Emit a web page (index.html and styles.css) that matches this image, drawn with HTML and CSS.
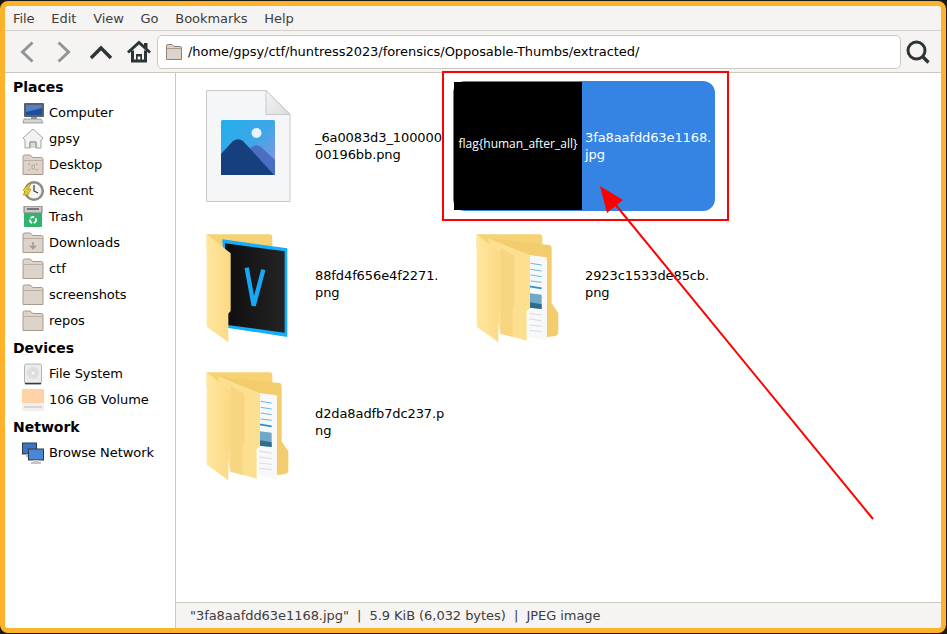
FILE: index.html
```html
<!DOCTYPE html>
<html lang="en">

<head>
  <meta charset="UTF-8">
  <title>extracted</title>
  <link rel="stylesheet" href="styles.css">
</head>

<body>
  <svg class="defs" width="0" height="0">
    <defs>
      <linearGradient id="pic" x1="0" y1="0" x2="1" y2="1">
        <stop offset="0" stop-color="#1fb0ec" />
        <stop offset="0.5" stop-color="#3fa6e6" />
        <stop offset="1" stop-color="#9a8fe0" />
      </linearGradient>
      <linearGradient id="flap" x1="0" y1="0" x2="1" y2="0">
        <stop offset="0" stop-color="#ffe79f" />
        <stop offset="1" stop-color="#fcd983" />
      </linearGradient>
      <linearGradient id="fold" x1="0" y1="0" x2="1" y2="1">
        <stop offset="0" stop-color="#f4f4f4" />
        <stop offset="1" stop-color="#dcdcdc" />
      </linearGradient>
      <linearGradient id="vcard" x1="0" y1="0" x2="1" y2="0">
        <stop offset="0" stop-color="#0e0e0e" />
        <stop offset="1" stop-color="#242424" />
      </linearGradient>

      <symbol id="stack" viewBox="-21 -18 390 390">
        <path d="M50 28H238Q247 28 247 38V70H50Z" fill="#f6d273" />
        <path d="M85 40L268 60Q275 61 275 70V235L295 265V322Q295 332 285 333L260 337V100L205 90Z" fill="#f3cc6e" />
        <path d="M205 90L260 97V347L205 337Z" fill="#f7f8fa" />
        <path d="M212 115L245 120M212 133L245 138M212 150L245 155M212 168L245 172" stroke="#6db6e6" stroke-width="3" />
        <path d="M208 184L245 190" stroke="#2d8fdc" stroke-width="5" />
        <path d="M210 205L245 209V252L210 248Z" fill="#6fa9c9" />
        <path d="M210 232L245 238V252L210 248Z" fill="#2f6d8a" />
        <path d="M208 265L245 270M208 282L245 287M208 300L245 304M208 316L245 320" stroke="#c9ccd0" stroke-width="2" />
        <path d="M85 40L210 92V250L200 258V347L120 325L100 200Z" fill="#fde08f" />
        <path d="M122 68L163 92V240L158 250V336L122 326Z" fill="#f8d581" />
        <path d="M50 28L122 85V258L115 266V352L50 305Z" fill="url(#flap)" />
      </symbol>

      <symbol id="vfolder" viewBox="-21 -18 390 390">
        <path d="M50 28H238Q247 28 247 38V72H50Z" fill="#f6d273" />
        <path d="M97 43L292 70V336L110 308Z" fill="#14aefc" />
        <path d="M105 55L284 79V323L112 300Z" fill="url(#vcard)" />
        <path d="M170 128L191 242L220 134" fill="none" stroke="#18a8f5" stroke-width="13" stroke-linejoin="bevel" />
        <path d="M50 28L122 85V258L115 266V352L50 305Z" fill="url(#flap)" />
      </symbol>

      <symbol id="place" viewBox="0 0 22 22">
        <path d="M1 5V2.500Q1 1 2.500 1H8L11 3.500H19.500Q21 3.500 21 5V20.500H1Z" fill="#dcd3ca" stroke="#a8998c" />
        <path d="M1 6.500H21" stroke="#bcaea2" />
      </symbol>
    </defs>
  </svg>

  <div class="window">
    <nav class="menubar">
      <span>File</span>
      <span>Edit</span>
      <span>View</span>
      <span>Go</span>
      <span>Bookmarks</span>
      <span>Help</span>
    </nav>

    <header class="toolbar">
      <svg class="tool tool-back" width="14" height="22" viewBox="0 0 14 22">
        <path d="M12.500 1.500L2.500 11L12.500 20.500" fill="none" stroke="#929595" stroke-width="3" />
      </svg>
      <svg class="tool tool-forward" width="14" height="22" viewBox="0 0 14 22">
        <path d="M1.500 1.500L11.500 11L1.500 20.500" fill="none" stroke="#929595" stroke-width="3" />
      </svg>
      <svg class="tool tool-up" width="24" height="16" viewBox="0 0 24 16">
        <path d="M2 14L12 4L22 14" fill="none" stroke="#2e3436" stroke-width="3.400" />
      </svg>
      <svg class="tool tool-home" width="26" height="24" viewBox="0 0 26 24">
        <path d="M2 12.500L13 2.500L24 12.500" fill="none" stroke="#2e3436" stroke-width="3" />
        <path d="M18 3H21.500V8H18Z" fill="#2e3436" />
        <path d="M6.500 10.500V21H19.500V10.500" fill="none" stroke="#2e3436" stroke-width="3" />
        <path d="M10 14H16V21H14.300V16.500H11.700V21H10Z" fill="#2e3436" />
      </svg>
      <div class="location">
        <svg width="16" height="16" viewBox="0 0 16 16">
          <path d="M.5 14.500V2Q.5 .5 2 .5H6L8 2.500H14Q15.500 2.500 15.500 4V15.500H.5Z" fill="#dcd3ca" stroke="#8f8073" />
          <path d="M.5 4.500H15.500" stroke="#a89a8d" />
        </svg>
        <span>/home/gpsy/ctf/huntress2023/forensics/Opposable-Thumbs/extracted/</span>
      </div>
      <svg class="tool tool-search" width="24" height="24" viewBox="0 0 24 24">
        <circle cx="10.500" cy="10.500" r="8.500" fill="none" stroke="#2e3436" stroke-width="3" />
        <path d="M16.500 16.500L22.500 22.500" stroke="#2e3436" stroke-width="3.400" />
      </svg>
    </header>

    <div class="main">
      <aside class="sidebar">
        <h3>Places</h3>
        <div class="place">
          <svg width="22" height="22" viewBox="0 0 22 22">
            <rect x="2" y="1" width="20" height="14" rx="1" fill="#5b6064" />
            <rect x="4" y="3" width="16" height="10" fill="#1f4f9c" />
            <path d="M4 3H20V6L4 10Z" fill="#4f80c8" />
            <rect x="9" y="15" width="6" height="2" fill="#999" />
            <path d="M2 17H19L21 21H1Z" fill="#d4d6d4" stroke="#6d7070" stroke-width=".6" />
          </svg>
          <span>Computer</span>
        </div>
        <div class="place">
          <svg width="22" height="22" viewBox="0 0 22 22">
            <path d="M11 1L21 10L19 12V20H14V14H8V20H3V12L1 10Z" fill="#f2f2f0" stroke="#a4a6a2" />
            <path d="M8 20V14H14V20" fill="#dadad6" stroke="#8d8f8b" />
          </svg>
          <span>gpsy</span>
        </div>
        <div class="place">
          <svg width="22" height="22" viewBox="0 0 22 22">
            <use href="#place" />
            <path d="M7 11V10H8M14 10H15V11M15 15V16H14M8 16H7V15" fill="none" stroke="#a8998c" />
            <rect x="10" y="11" width="2.500" height="4" fill="none" stroke="#a8998c" stroke-width=".7" />
          </svg>
          <span>Desktop</span>
        </div>
        <div class="place">
          <svg width="22" height="22" viewBox="0 0 22 22">
            <circle cx="12" cy="11" r="10" fill="#8b8c86" />
            <circle cx="12" cy="11" r="7.500" fill="#f4f4f0" />
            <path d="M12 5V11L16 13" fill="none" stroke="#333" stroke-width="1.200" />
            <path d="M7 4L1 10L3 12L1 15H6L9 9L6 9L9 4Z" fill="#e6c72c" stroke="#9a8518" stroke-width=".6" />
          </svg>
          <span>Recent</span>
        </div>
        <div class="place">
          <svg width="22" height="22" viewBox="0 0 22 22">
            <rect x="2" y="0" width="18" height="7" fill="#c9cbc7" stroke="#7b7d79" />
            <rect x="5" y="2" width="12" height="2" fill="#777" />
            <rect x="2" y="7" width="18" height="14" rx="1" fill="#2fb36d" />
            <circle cx="11" cy="14" r="3" fill="none" stroke="#fff" stroke-width="1.800" stroke-dasharray="4 1.500" />
          </svg>
          <span>Trash</span>
        </div>
        <div class="place">
          <svg width="22" height="22" viewBox="0 0 22 22">
            <use href="#place" />
            <path d="M11 10V16M8 13.500L11 16.500L14 13.500" fill="none" stroke="#a8998c" stroke-width="1.600" />
          </svg>
          <span>Downloads</span>
        </div>
        <div class="place">
          <svg width="22" height="22" viewBox="0 0 22 22"><use href="#place" /></svg>
          <span>ctf</span>
        </div>
        <div class="place">
          <svg width="22" height="22" viewBox="0 0 22 22"><use href="#place" /></svg>
          <span>screenshots</span>
        </div>
        <div class="place">
          <svg width="22" height="22" viewBox="0 0 22 22"><use href="#place" /></svg>
          <span>repos</span>
        </div>

        <h3>Devices</h3>
        <div class="place">
          <svg width="22" height="22" viewBox="0 0 22 22">
            <rect x="2.500" y="1" width="17" height="20" rx="1.500" fill="#ececea" stroke="#b4b5b2" />
            <circle cx="11" cy="10" r="6" fill="#dededc" />
            <circle cx="11" cy="10" r="1.500" fill="#f6f6f6" />
            <path d="M3 20.500H19" stroke="#3a3a3a" stroke-width="1.500" />
          </svg>
          <span>File System</span>
        </div>
        <div class="place">
          <svg width="22" height="22" viewBox="0 0 22 22">
            <rect x="0" y="0" width="22" height="21" fill="#ffd3a6" />
            <rect x="0" y="14" width="22" height="8" fill="#f1f0ee" />
            <path d="M2 18H20" stroke="#bbbbb8" />
          </svg>
          <span>106 GB Volume</span>
        </div>

        <h3>Network</h3>
        <div class="place">
          <svg width="22" height="22" viewBox="0 0 22 22">
            <rect x=".5" y="1" width="14" height="11" fill="#3a74c4" stroke="#2b3a4d" />
            <path d="M4 12H11V15H4Z" fill="#bbb" />
            <rect x="6.500" y="7" width="15" height="11" fill="#4a86d4" stroke="#2b3a4d" />
            <path d="M11 18H17V20H11Z" fill="#ccc" />
            <path d="M9 21H19" stroke="#8a8a8a" />
          </svg>
          <span>Browse Network</span>
        </div>
      </aside>

      <div class="content">
        <section class="files">
          <div class="file">
            <svg width="130" height="130" viewBox="0 0 130 130">
              <path d="M23.500 9.500H83L107 33V120.500H23.500Z" fill="#f5f6f8" stroke="#c8c9cb" />
              <path d="M83 9.500V33.500H107Z" fill="url(#fold)" stroke="#c8c9cb" />
              <rect x="38" y="39" width="54" height="55" rx="1.500" fill="url(#pic)" />
              <circle cx="73.500" cy="52" r="5" fill="#e8f3fb" />
              <path d="M65 68L70 65.500Q74 63 78 66L92 79V94H80Z" fill="#4a6fc0" />
              <path d="M38 73L50 60Q55 56.500 60 60L91 94H38Z" fill="#163f7d" />
            </svg>
            <span class="name">_6a0083d3_100000<br>00196bb.png</span>
          </div>
          <div class="file selected">
            <div class="thumb">flag{human_after_all}</div>
            <span class="name">3fa8aafdd63e1168.<br>jpg</span>
          </div>
          <div class="file">
            <svg width="130" height="130"><use href="#vfolder" /></svg>
            <span class="name">88fd4f656e4f2271.<br>png</span>
          </div>
          <div class="file">
            <svg width="130" height="130"><use href="#stack" /></svg>
            <span class="name">2923c1533de85cb.<br>png</span>
          </div>
          <div class="file">
            <svg width="130" height="130"><use href="#stack" /></svg>
            <span class="name">d2da8adfb7dc237.p<br>ng</span>
          </div>
        </section>
        <footer class="status">"3fa8aafdd63e1168.jpg"&nbsp; |&nbsp; 5.9 KiB (6,032 bytes)&nbsp; |&nbsp; JPEG image</footer>
      </div>
    </div>
  </div>

  <!-- red markup drawn on top of the screenshot -->
  <svg class="markup" width="947" height="634" viewBox="0 0 947 634">
    <rect x="443" y="72" width="285" height="148" fill="none" stroke="#fe0000" stroke-width="2" />
    <path d="M873 519L610 198" stroke="#fe0000" stroke-width="2" />
    <path d="M600 186L623 200L607 213Z" fill="#fe0000" />
  </svg>
</body>

</html>
```

FILE: styles.css
```css
* {
  padding: 0;
  margin: 0;
  box-sizing: border-box;
}

body {
  position: relative;
  width: 947px;
  height: 634px;
  overflow: hidden;
  background: #1b1b1b;
  font-family: "DejaVu Sans", sans-serif;
  font-size: 13px;
  letter-spacing: -0.05px;
  color: #000;
}

.defs {
  position: absolute;
}

.window {
  display: flex;
  flex-direction: column;
  width: 946px;
  height: 632px;
  margin-top: 1px;
  border: 5px solid #fdb22b;
  border-radius: 8px;
  background: #f5f4f2;
  overflow: hidden;
}

.menubar {
  display: flex;
  align-items: center;
  flex: none;
  gap: 16.800px;
  height: 25px;
  padding-left: 8px;
  color: #3d3d3d;
  border-bottom: 1px solid #d5d0cc;
}

.toolbar {
  display: flex;
  align-items: center;
  flex: none;
  height: 42px;
  border-bottom: 1px solid #cdc7c2;
}

.tool {
  flex: none;
}

.tool-back {
  margin-left: 15px;
}

.tool-forward {
  margin-left: 23px;
}

.tool-up {
  margin-left: 18px;
}

.tool-home {
  margin-left: 13px;
}

.tool-search {
  margin-left: 5px;
}

.location {
  display: flex;
  align-items: center;
  gap: 6px;
  width: 744px;
  height: 34px;
  margin-left: 5px;
  padding-left: 8px;
  background: #fff;
  border: 1px solid #cdc7c2;
  border-radius: 5px;
}

.main {
  display: flex;
  flex: 1;
  min-height: 0;
}

.sidebar {
  flex: none;
  width: 171px;
  background: #fff;
  border-right: 1px solid #cdc7c2;
}

.sidebar h3 {
  height: 26px;
  margin-top: 1px;
  padding-left: 8px;
  font-size: 14px;
  letter-spacing: 0;
  line-height: 26px;
}

.place {
  display: flex;
  align-items: center;
  gap: 5px;
  height: 26px;
  padding-left: 17px;
}

.place span {
  margin-top: -1px;
}

.content {
  display: flex;
  flex-direction: column;
  flex: 1;
  min-width: 0;
}

.files {
  display: grid;
  flex: 1;
  grid-template-columns: repeat(auto-fill, 262px);
  grid-auto-rows: 130px;
  gap: 8px;
  align-content: start;
  padding: 8px 7px;
  background: #fff;
}

.file {
  display: flex;
  align-items: center;
  gap: 2px;
  border-radius: 12px;
}

.file svg {
  flex: none;
}

.name {
  white-space: nowrap;
  line-height: 17px;
  margin-top: -1px;
  letter-spacing: -0.1px;
}

.selected {
  background: #3584e4;
  color: #fff;
}

.thumb {
  display: flex;
  align-items: center;
  justify-content: center;
  flex: none;
  width: 128px;
  height: 128px;
  margin: 1px;
  padding-bottom: 6px;
  background: #000;
  color: #fff;
  font-family: "Open Sans", sans-serif;
  font-size: 12px;
  letter-spacing: 0;
}

.status {
  flex: none;
  height: 26px;
  padding-left: 14px;
  line-height: 25px;
  color: #3d3d3d;
  border-top: 1px solid #cdc7c2;
  background: #f5f4f2;
}

.markup {
  position: absolute;
  left: 0;
  top: 0;
}
```
